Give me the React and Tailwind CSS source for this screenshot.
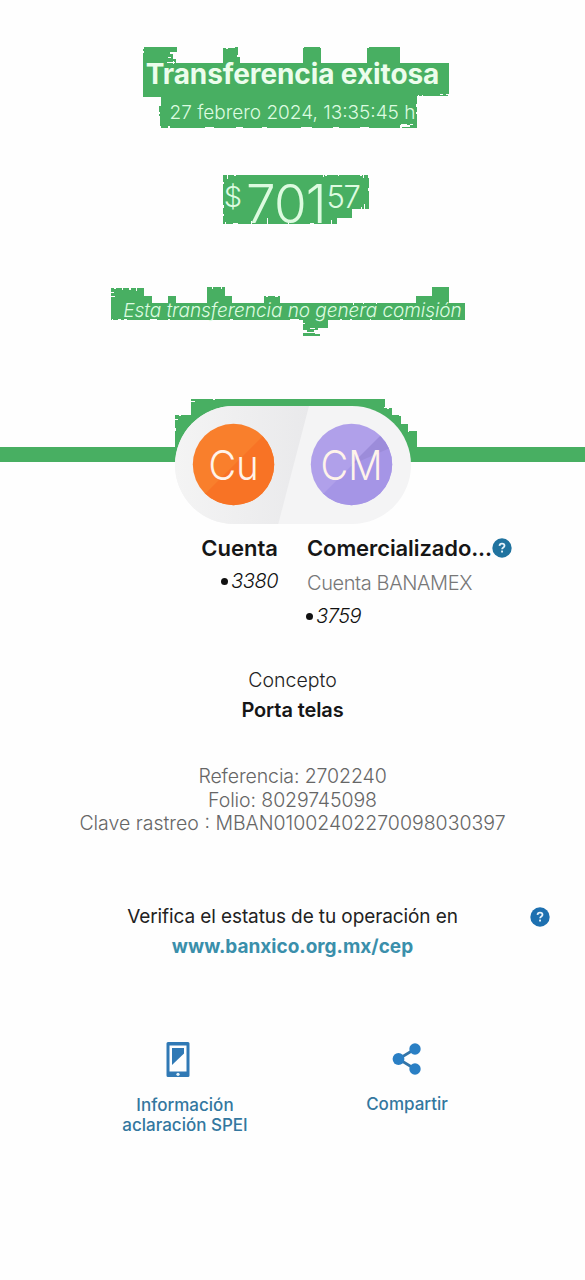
const GREEN = "#48af62";

// x, y, width, height
const patches = [
  // title
  [143, 63, 306, 31], [143, 94, 303, 3], [144, 47, 26, 16], [143, 49, 2, 14], [170, 47, 7, 5], [169, 54, 4, 9], [173, 59, 3, 4],
  [223, 48, 12, 15], [235, 47, 3, 8], [233, 51, 4, 12], [236, 57, 4, 6], [303, 48, 18, 15], [304, 47, 16, 1],
  [367, 48, 33, 15], [369, 47, 31, 1], [446, 95, 2, 1],
  // date
  [161, 97, 256, 28], [159, 106, 2, 10], [160, 116, 2, 10], [161, 125, 239, 3], [402, 127, 15, 1], [410, 125, 7, 2],
  // amount
  [223, 175, 129, 43], [223, 218, 114, 6], [352, 175, 16, 34], [368, 178, 1, 10], [367, 191, 2, 18], [352, 209, 0, 0],
  [337, 216, 0, 0],
  // note
  [111, 303, 354, 17], [464, 304, 1, 15], [111, 288, 33, 15], [144, 296, 8, 7], [168, 296, 8, 7], [207, 287, 18, 16],
  [225, 296, 7, 7], [264, 296, 16, 7], [416, 296, 16, 7], [432, 287, 17, 16], [303, 320, 25, 8], [303, 328, 15, 2],
  [307, 330, 7, 2], [303, 333, 12, 3], [313, 334, 7, 2],
  // pill surroundings
  [191, 399, 194, 49], [175, 415, 16, 32], [385, 408, 7, 40], [392, 415, 9, 33], [401, 424, 7, 24], [408, 431, 9, 17],
  [0, 447, 585, 15],
];

const nicks = [
  [172, 53, 3, 1], [168, 57, 3, 1], [173, 61, 1, 3], [167, 62, 8, 1], [226, 47, 2, 2], [237, 55, 2, 1], [143, 51, 1, 2],
  [417, 96, 30, 1], [418, 95, 1, 1], [422, 95, 1, 1], [440, 94, 3, 1], [401, 124, 6, 1], [410, 124, 3, 1], [402, 126, 4, 1],
  [168, 126, 2, 2], [205, 127, 9, 1], [236, 127, 7, 1], [262, 127, 5, 1], [301, 127, 11, 1], [333, 127, 6, 1], [360, 127, 9, 1],
  [416, 104, 1, 3], [416, 112, 1, 2], [159, 112, 1, 2],
  [227, 175, 1, 4], [234, 175, 2, 1], [323, 175, 1, 2], [325, 175, 2, 1], [338, 175, 1, 1], [360, 175, 2, 1], [363, 175, 1, 3],
  [223, 182, 1, 2], [223, 205, 1, 3], [223, 214, 1, 2], [225, 222, 1, 2], [233, 223, 5, 1], [251, 221, 1, 3],
  [267, 218, 1, 6], [288, 222, 1, 2], [310, 223, 4, 1], [331, 220, 1, 4], [364, 204, 1, 5], [361, 207, 1, 2],
  [111, 292, 3, 1], [111, 296, 4, 1], [114, 287, 2, 2], [122, 288, 1, 2], [129, 288, 2, 2], [136, 288, 1, 3],
  [112, 319, 1, 2], [118, 319, 3, 1], [124, 319, 3, 1], [150, 319, 7, 1], [168, 319, 2, 1], [230, 319, 3, 1], [290, 319, 9, 1],
  [340, 319, 2, 1], [350, 319, 2, 1], [370, 319, 1, 1], [400, 319, 3, 1], [430, 319, 2, 1], [266, 296, 2, 1], [275, 296, 3, 1],
  [340, 302, 3, 1], [353, 302, 1, 3], [363, 303, 1, 1], [376, 303, 1, 1], [212, 287, 1, 2], [221, 287, 1, 2],
  [303, 323, 2, 1], [310, 328, 5, 1], [191, 401, 4, 1], [213, 399, 2, 1], [175, 419, 3, 1], [179, 415, 2, 1],
  [175, 428, 1, 3], [387, 407, 2, 2], [399, 414, 2, 2], [384, 407, 1, 1], [408, 431, 1, 1],
];

function HeaderBackground() {
  return (
    <svg className="absolute inset-0" width="585" height="462" viewBox="0 0 585 462" shapeRendering="crispEdges">
      {patches.map(([x, y, w, h], i) => (
        <rect key={i} x={x} y={y} width={w} height={h} fill={GREEN} />
      ))}
      {nicks.map(([x, y, w, h], i) => (
        <rect key={i} x={x} y={y} width={w} height={h} fill="#fefefe" />
      ))}
    </svg>
  );
}

function HelpIcon({ className }) {
  return (
    <svg className={className} width="20" height="20" viewBox="0 0 20 20" fill="none">
      <circle cx="10" cy="10" r="9.7" fill="currentColor" />
      <path d="M7.5 7.9c.1-1.4 1.1-2.2 2.5-2.2s2.5.8 2.5 2.1c0 1.7-2.4 1.7-2.4 3.5" stroke="#e6f3fb" strokeWidth="1.8" />
      <rect x="9.1" y="12.6" width="1.9" height="1.9" fill="#e6f3fb" />
    </svg>
  );
}

function AccountsPill() {
  return (
    <svg width="236" height="119" viewBox="0 0 236 119">
      <defs>
        <linearGradient id="left" x1="0" x2="1">
          <stop offset="0" stopColor="#f4f4f4" />
          <stop offset="1" stopColor="#e9e9eb" />
        </linearGradient>
        <clipPath id="pill">
          <rect width="236" height="118" rx="59" />
        </clipPath>
        <clipPath id="from">
          <circle cx="58.5" cy="58.5" r="40.7" />
        </clipPath>
        <clipPath id="to">
          <circle cx="176.5" cy="58.5" r="40.7" />
        </clipPath>
      </defs>
      <g clipPath="url(#pill)">
        <rect width="236" height="119" fill="#f4f4f5" />
        <path d="M0 0h134L103 119H0z" fill="url(#left)" />
      </g>
      <g clipPath="url(#from)">
        <rect x="17" y="17" width="84" height="84" fill="#f97f2c" />
        <path d="M101 17v84H17z" fill="#f87325" />
      </g>
      <g clipPath="url(#to)">
        <rect x="135" y="17" width="84" height="84" fill="#b0a0ea" />
        <path d="M219 17v84h-84z" fill="#a595e6" />
        <path d="M205 30l10 12-39 17z" fill="#9c8cda" />
      </g>
      <g fill="#fff3ea" fontFamily="Inter, sans-serif" fontWeight="300" fontSize="41">
        <text x="33.500" y="73.500" textLength="50" lengthAdjust="spacingAndGlyphs">Cu</text>
        <text x="145.500" y="73.500" textLength="62" lengthAdjust="spacingAndGlyphs">CM</text>
      </g>
    </svg>
  );
}

function Last4({ value }) {
  return (
    <p className="flex h-6 items-center text-[20px] leading-6 font-light tracking-[-0.5px] text-[#111]">
      <span className="mr-[3px] size-[7px] rounded-full bg-[#111]" />
      <span className="italic">{value}</span>
    </p>
  );
}

function PhoneIcon() {
  return (
    <svg width="24" height="36" viewBox="0 0 24 36" fill="#3079b5">
      <path fillRule="evenodd" d="M2 0h20a1.5 1.5 0 0 1 1.5 1.500v32A1.500 1.500 0 0 1 22 35H2A1.500 1.500 0 0 1 .5 33.500v-32A1.500 1.500 0 0 1 2 0zM3.500 3.500v26h17v-26z" />
      <path d="M6 6h12v5.500L6 23z" />
      <circle cx="12" cy="32.300" r="1.600" fill="#e6f3fb" />
    </svg>
  );
}

function ShareIcon() {
  return (
    <svg width="30" height="34" viewBox="0 0 30 34" fill="#2a7fc4">
      <path d="M23 7L6.500 17 23 27" fill="none" stroke="#3375a8" strokeWidth="2.700" />
      <circle cx="23" cy="7" r="5.700" />
      <circle cx="6.500" cy="17" r="5.900" />
      <circle cx="23" cy="27" r="5.700" />
    </svg>
  );
}

export default function App() {
  return (
    <main className="h-[1280px] w-[585px] overflow-hidden bg-[#fefefe] font-[Inter,sans-serif] text-[#161616]">
      <header className="relative h-[534px]">
        <HeaderBackground />
        <div className="relative flex flex-col items-center pt-[58px] text-[#ddfbe0]">
          <h1 className="text-[28px] leading-8 font-bold tracking-[-0.1px] text-[#ecfdec]">Transferencia exitosa</h1>
          <p className="mt-[11px] text-[19px] leading-6 font-light">27 febrero 2024, 13:35:45 h</p>
          <p className="mt-[51px] mr-[2px] flex h-14 items-start font-light">
            <span className="mt-[5px] mr-1 text-[29px] leading-8">$</span>
            <span className="text-[53px] leading-14 tracking-[-1px]">701</span>
            <span className="mt-[5px] ml-[1px] text-[31px] leading-8 tracking-[-1.5px]">57</span>
          </p>
          <p className="mt-[67px] text-[19px] leading-6 font-light tracking-[-0.05px] italic">Esta transferencia no genera comisión</p>
          <div className="mt-[83px]">
            <AccountsPill />
          </div>
        </div>
      </header>

      <section className="flex gap-[29px]">
        <div className="flex w-[278px] flex-col items-end">
          <h2 className="text-[22px] leading-7 font-semibold">Cuenta</h2>
          <div className="mt-[7px]">
            <Last4 value="3380" />
          </div>
        </div>
        <div>
          <div className="flex items-center">
            <h2 className="text-[22px] leading-7 font-semibold tracking-[-0.1px]">Comercializado...</h2>
            <HelpIcon className="text-[#20739f]" />
          </div>
          <p className="mt-[9px] text-[20px] leading-6 font-light tracking-[-0.4px] text-[#777]">Cuenta BANAMEX</p>
          <div className="mt-[9px] -ml-[1px]">
            <Last4 value="3759" />
          </div>
        </div>
      </section>

      <section className="mt-[37px] text-center">
        <p className="text-[19.5px] leading-[30px] font-light text-[#222]">Concepto</p>
        <p className="text-[20px] leading-[30px] font-semibold tracking-[-0.1px]">Porta telas</p>
      </section>

      <section className="mt-[40px] text-center text-[19.5px] leading-[23.7px] font-light text-[#666]">
        <p className="tracking-[-0.1px]">Referencia: 2702240</p>
        <p className="tracking-[-0.1px]">Folio: 8029745098</p>
        <p>Clave rastreo : MBAN01002402270098030397</p>
      </section>

      <section className="mt-[66px] flex items-start">
        <div className="ml-[35px] w-[515px] text-center">
          <p className="text-[19px] leading-[30px] tracking-[-0.1px] text-[#222]">Verifica el estatus de tu operación en</p>
          <a className="text-[19px] leading-[30px] font-bold text-[#3a8fab]">www.banxico.org.mx/cep</a>
        </div>
        <HelpIcon className="-ml-5 mt-[5px] shrink-0 text-[#1d70b0]" />
      </section>

      <section className="mt-[80px] flex text-[17px] leading-5 font-medium text-[#33779f]">
        <button className="ml-[105px] flex w-40 flex-col items-center">
          <span className="mr-[14px]">
            <PhoneIcon />
          </span>
          <span className="mt-[17px]">
            Información
            <br />
            aclaración SPEI
          </span>
        </button>
        <button className="ml-[62px] flex w-40 flex-col items-center">
          <ShareIcon />
          <span className="mt-[18px]">Compartir</span>
        </button>
      </section>
    </main>
  );
}
